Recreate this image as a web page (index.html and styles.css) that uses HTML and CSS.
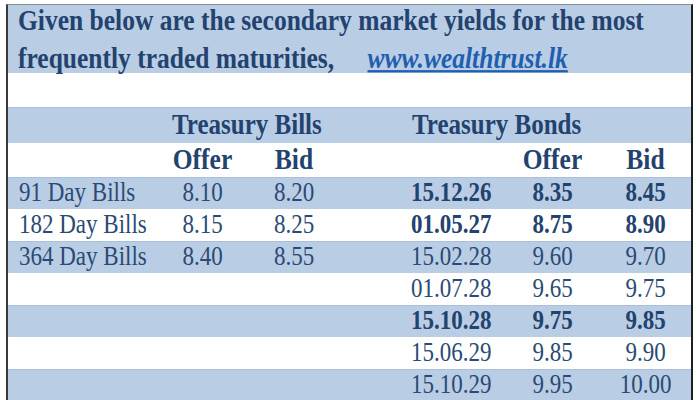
FILE: index.html
```html
<!DOCTYPE html>
<html>
<head>
<meta charset="utf-8">
<link rel="stylesheet" href="styles.css">
</head>
<body>
<div class="frame">
  <div class="intro"><div class="intro-text">Given below are the secondary market yields for the most<br>frequently traded maturities, <a class="link" href="#">www.wealthtrust.lk</a></div></div>
  <table class="yields">
    <colgroup>
      <col class="c-label"><col class="c-offer1"><col class="c-bid1"><col class="c-gap"><col class="c-date"><col class="c-offer2"><col class="c-bid2">
    </colgroup>
    <tr class="r-blank"><td colspan="7"></td></tr>
    <tr class="blue r-group">
      <td></td>
      <td colspan="2" class="group"><span class="t">Treasury Bills</span></td>
      <td></td>
      <td colspan="3" class="group"><span class="t">Treasury Bonds</span></td>
    </tr>
    <tr class="r-sub">
      <td></td>
      <td class="num b"><span class="t">Offer</span></td>
      <td class="num b"><span class="t">Bid</span></td>
      <td></td>
      <td></td>
      <td class="num b"><span class="t">Offer</span></td>
      <td class="num b"><span class="t">Bid</span></td>
    </tr>
    <tr class="blue">
      <td class="label"><span class="t">91 Day Bills</span></td><td class="num"><span class="t">8.10</span></td><td class="num"><span class="t">8.20</span></td><td></td>
      <td class="date b"><span class="t">15.12.26</span></td><td class="num b"><span class="t">8.35</span></td><td class="num b"><span class="t">8.45</span></td>
    </tr>
    <tr>
      <td class="label"><span class="t">182 Day Bills</span></td><td class="num"><span class="t">8.15</span></td><td class="num"><span class="t">8.25</span></td><td></td>
      <td class="date b"><span class="t">01.05.27</span></td><td class="num b"><span class="t">8.75</span></td><td class="num b"><span class="t">8.90</span></td>
    </tr>
    <tr class="blue">
      <td class="label"><span class="t">364 Day Bills</span></td><td class="num"><span class="t">8.40</span></td><td class="num"><span class="t">8.55</span></td><td></td>
      <td class="date"><span class="t">15.02.28</span></td><td class="num"><span class="t">9.60</span></td><td class="num"><span class="t">9.70</span></td>
    </tr>
    <tr>
      <td></td><td></td><td></td><td></td>
      <td class="date"><span class="t">01.07.28</span></td><td class="num"><span class="t">9.65</span></td><td class="num"><span class="t">9.75</span></td>
    </tr>
    <tr class="blue">
      <td></td><td></td><td></td><td></td>
      <td class="date b"><span class="t">15.10.28</span></td><td class="num b"><span class="t">9.75</span></td><td class="num b"><span class="t">9.85</span></td>
    </tr>
    <tr>
      <td></td><td></td><td></td><td></td>
      <td class="date"><span class="t">15.06.29</span></td><td class="num"><span class="t">9.85</span></td><td class="num"><span class="t">9.90</span></td>
    </tr>
    <tr class="blue">
      <td></td><td></td><td></td><td></td>
      <td class="date"><span class="t">15.10.29</span></td><td class="num"><span class="t">9.95</span></td><td class="num"><span class="t">10.00</span></td>
    </tr>
  </table>
</div>
</body>
</html>
```
FILE: styles.css
```css
html, body {
  margin: 0;
  padding: 0;
  background: #ffffff;
}
body {
  font-family: "Liberation Serif", "Times New Roman", serif;
  color: #2a4a74;
}
.frame {
  margin: 4px 0 0 6px;
  width: 683px;
  border-left: 2px solid #3a3a3a;
  border-top: 1px solid #8a8f96;
  border-right: 2px solid #1e1e1e;
  height: 400px;
  overflow: hidden;
}
.intro {
  background: #b9cde5;
  height: 68px;
  padding-left: 10px;
}
.intro-text {
  color: #23426e;
  font-weight: bold;
  font-size: 25.5px;
  line-height: 33px;
  padding-top: 1px;
  transform: scaleY(1.15);
  transform-origin: left center;
}
.link {
  color: #1f5fb0;
  font-style: italic;
  margin-left: 27px;
  text-decoration: underline;
}
.yields {
  border-collapse: collapse;
  table-layout: fixed;
  width: 683px;
  font-size: 23px;
}
.c-label { width: 152px; }
.c-offer1 { width: 85px; }
.c-bid1 { width: 98px; }
.c-gap { width: 57px; }
.c-date { width: 105px; }
.c-offer2 { width: 95px; }
.c-bid2 { width: 91px; }
.yields td {
  padding: 0;
  height: 32px;
  line-height: 32px;
  white-space: nowrap;
  vertical-align: middle;
}
.yields tr.r-blank td { height: 34px; }
.yields tr.r-group td { height: 36px; }
.yields tr.r-sub td { height: 34px; }
.blue td {
  background: #b9cde5;
  box-shadow: inset 0 1px 0 #aabfdb;
}
.t {
  display: inline-block;
  transform: scaleY(1.15);
  transform-origin: center;
}
.group {
  font-weight: bold;
  font-size: 25px;
  color: #23426e;
  padding-left: 12px !important;
}
.label { padding-left: 11px !important; }
.date { padding-left: 11px !important; }
.num { text-align: center; }
.b {
  font-weight: bold;
  color: #23426e;
}
.r-sub .b { font-size: 25.5px; }
```
